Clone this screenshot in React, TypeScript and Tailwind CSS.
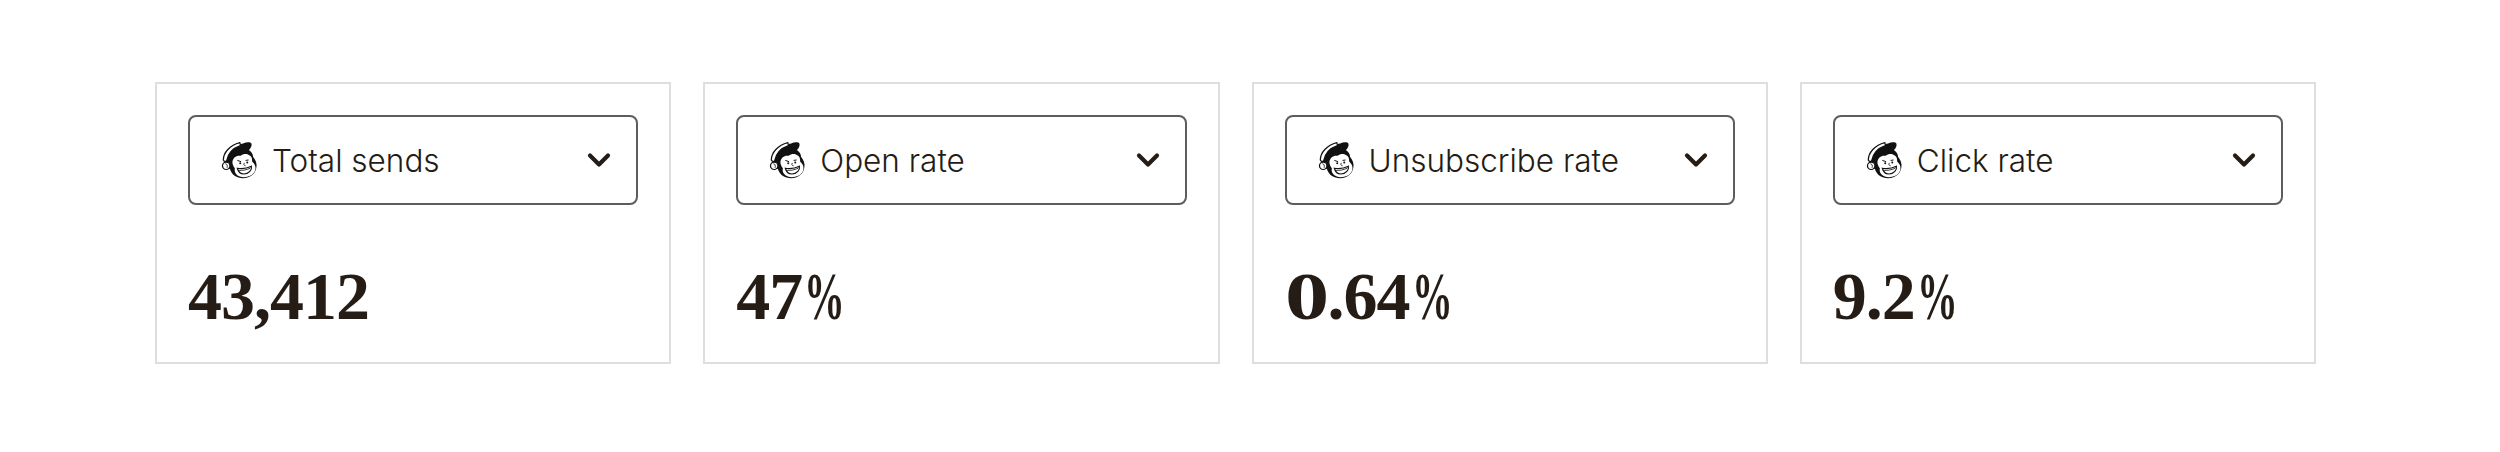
import { ChevronDown } from 'lucide-react';

const Freddie = () => (
    <svg viewBox="0 0 46 46" className="w-[38px] h-[38px] shrink-0">
        {/* head and cap */}
        <path d="M10 17C14 9 20 4 28 3c4-2 9-2 10 0 1 3-1 6-3 8 3 2 5 5 5 8 3 4 5 8 4 13-1 8-8 13-16 13-8 0-14-4-16-11-3-1-5-3-6-6-1-4 1-9 4-11Z" fill="#111" />
        {/* brim */}
        <path d="M4 23C4 14 12 5 24 2c1 2 1 3 0 4C15 9 10 15 8 24c-1 1-3 1-4-1Z" fill="#fff" stroke="#111" strokeWidth="1.500" />
        {/* ear */}
        <circle cx="7.500" cy="30" r="4.500" fill="#fff" stroke="#111" strokeWidth="1.500" />
        <path d="M6.500 27.500c2 0 3 2.500 2 5" fill="none" stroke="#111" strokeWidth="1" />
        {/* face */}
        <path d="M15 25c1-5 5-8 10-7 3-3 8-3 10-1 3 1 4 4 4 8 4 3 5 8 3 12-3 6-12 8-18 6-5-2-7-6-6-10-2-3-3-5-3-8Z" fill="#fff" />
        {/* eyes and nose */}
        <path d="M21 23.500l4.500 1.500M31 23.500l3.500-.5" stroke="#111" strokeWidth="1.200" fill="none" />
        <circle cx="24.500" cy="27" r="1.200" fill="#111" />
        <circle cx="33" cy="26" r="1.200" fill="#111" />
        <path d="M29.500 26.500c-1 2-1 3 1.500 3.500" stroke="#111" strokeWidth="1" fill="none" />
        {/* smile */}
        <path d="M21 33c6 1 11 .5 17-2.500 1 4-3 9.500-9 9.500-4 0-7-3-8-7Z" fill="#fff" stroke="#111" strokeWidth="1.400" />
        <path d="M22 35.500c5 .5 10-.5 14.500-2.500" stroke="#111" strokeWidth="1" fill="none" />
    </svg>
);

const stats = [
    { label: 'Total sends', value: '43,412' },
    { label: 'Open rate', value: '47%' },
    { label: 'Unsubscribe rate', value: '0.64%' },
    { label: 'Click rate', value: '9.2%' },
];

// the reference's percent sign is narrow and its zero is wide, unlike Liberation Serif
const Value = ({ value }: { value: string }) => {
    if (!value.endsWith('%')) return <>{value}</>;
    const digits = value.slice(0, -1);
    return (
        <>
            {digits.startsWith('0') ? (
                <>
                    <span className="inline-block origin-left scale-x-[1.3] mr-[10px]">0</span>
                    {digits.slice(1)}
                </>
            ) : (
                digits
            )}
            <span className="inline-block origin-left scale-x-[0.6] mr-[-27px] ml-[2px]">%</span>
        </>
    );
};

const App = () => {
    return (
        <div className="w-[2500px] h-[452px] bg-white pt-[82px] pl-[155px] pr-[184px] flex gap-[32px] items-start font-['Inter',sans-serif]">
            {stats.map((stat) => (
                <div key={stat.label} className="flex-1 h-[282px] border-2 border-[#dedede] px-[31px] pt-[31px]">
                    <div className="h-[90px] border-2 border-[#5f5c59] rounded-[8px] flex items-center justify-between pl-[30px] pr-[19px]">
                        <div className="flex items-center gap-[14px]">
                            <Freddie />
                            <span className="text-[31.5px] font-light pt-[2px] text-[#241c15]">{stat.label}</span>
                        </div>
                        <ChevronDown className="w-[36px] h-[36px] text-[#241c15]" strokeWidth={2.8} />
                    </div>
                    <div className="mt-[51px] text-[68px] leading-[80px] font-bold tracking-[-1px] text-[#241c15] font-['Liberation_Serif',serif]">
                        <Value value={stat.value} />
                    </div>
                </div>
            ))}
        </div>
    );
};

export default App;
